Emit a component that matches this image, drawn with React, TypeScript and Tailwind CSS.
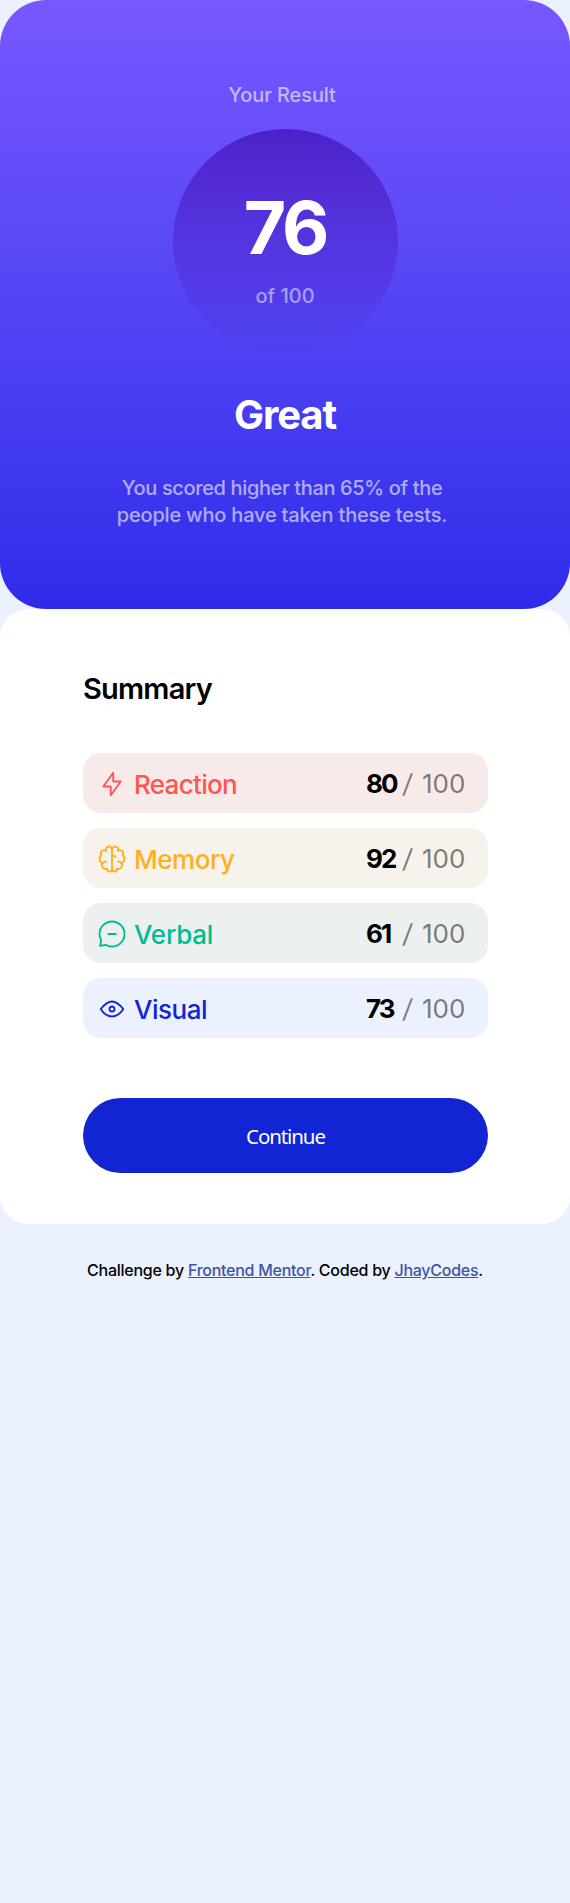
import type { ReactNode } from "react";

type Score = {
  label: string;
  value: number;
  box: string;
  text: string;
  spacing: string;
  icon: ReactNode;
};

const scores: Score[] = [
  {
    label: "Reaction",
    value: 80,
    box: "bg-[#f9eaea]",
    text: "text-[#ff5555]",
    spacing: "tracking-[-0.7px]",
    icon: <path d="M10.833 8.333V2.5l-6.666 9.167h5V17.5l6.666-9.167h-5Z" />,
  },
  {
    label: "Memory",
    value: 92,
    box: "bg-[#f7f2eb]",
    text: "text-[#ffb01f]",
    spacing: "tracking-[-0.45px]",
    icon: (
      <>
        <path d="M5.833 11.667a2.5 2.5 0 1 0 .834 4.858" />
        <path d="M3.553 13.004a3.333 3.333 0 0 1-.728-5.53m.025-.067a2.083 2.083 0 0 1 2.983-2.824m.199.054A2.083 2.083 0 1 1 10 3.75v12.917a1.667 1.667 0 0 1-3.333 0M10 5.833a2.5 2.5 0 0 0 2.5 2.5m1.667 3.334a2.5 2.5 0 1 1-.834 4.858" />
        <path d="M16.447 13.004a3.334 3.334 0 0 0 .728-5.53m-.025-.067a2.083 2.083 0 0 0-2.983-2.824M10 3.75a2.085 2.085 0 0 1 2.538-2.033 2.084 2.084 0 0 1 1.43 2.92m-.635 12.03a1.667 1.667 0 0 1-3.333 0" />
      </>
    ),
  },
  {
    label: "Verbal",
    value: 61,
    box: "bg-[#ecf1f0]",
    text: "text-[#00bd91]",
    spacing: "tracking-[-0.2px]",
    icon: (
      <path d="M7.5 10h5M10 18.333A8.333 8.333 0 1 0 1.667 10c0 1.518.406 2.942 1.115 4.167l-.699 3.75 3.75-.699A8.295 8.295 0 0 0 10 18.333Z" />
    ),
  },
  {
    label: "Visual",
    value: 73,
    box: "bg-[#ebf1ff]",
    text: "text-[#1125d4]",
    spacing: "tracking-[-0.5px]",
    icon: (
      <>
        <path d="M10 11.667a1.667 1.667 0 1 0 0-3.334 1.667 1.667 0 0 0 0 3.334Z" />
        <path d="M17.5 10c-1.574 2.492-4.402 5-7.5 5s-5.926-2.508-7.5-5C4.416 7.632 6.66 5 10 5s5.584 2.632 7.5 5Z" />
      </>
    ),
  },
];

function ScoreRow({ score }: { score: Score }) {
  return (
    <li className={`flex h-[60px] items-center rounded-[18px] pr-[21px] pl-[14px] ${score.box}`}>
      <span className={`flex items-center ${score.text}`}>
        <svg
          className="mt-[2px] size-[30px]"
          viewBox="0 0 20 20"
          fill="none"
          stroke="currentColor"
          strokeWidth="1.25"
          strokeLinecap="round"
          strokeLinejoin="round"
        >
          {score.icon}
        </svg>
        <span className={`pt-[3px] pl-[7px] text-[26px] leading-8 font-medium ${score.spacing}`}>
          {score.label}
        </span>
      </span>
      <span className="ml-auto flex pt-[2px] text-[26px] leading-8">
        <b className="w-[37px] font-bold tracking-[-1.9px] text-black">{score.value}</b>
        <span className="w-[19px] -skew-x-6 text-black/50">/</span>
        <span className="w-[45px] text-black/50">100</span>
      </span>
    </li>
  );
}

export default function App() {
  return (
    <div className="min-h-[1903px] bg-[#ebf1ff] font-['Inter',sans-serif]">
      <section className="flex h-[609px] flex-col items-center rounded-[46px] bg-linear-to-b from-[#7857ff] to-[#2e2be9] pt-[81px] text-center">
        <p className="pr-[6px] text-[20px] leading-7 font-medium tracking-[-0.1px] text-white/60">
          Your Result
        </p>
        <div className="mt-5 flex size-[225px] flex-col items-center rounded-full bg-linear-to-b from-[#4d21c9] to-[#2521c9]/0 pt-[63px]">
          <span className="text-[73px] leading-[72px] font-bold tracking-[-3px] text-white">76</span>
          <span className="mt-[18px] text-[20px] leading-7 font-medium text-white/50">of 100</span>
        </div>
        <h1 className="mt-[37px] text-[40px] leading-[48px] font-bold tracking-[-1.1px] text-white">
          Great
        </h1>
        <p className="mt-9 flex flex-col pr-[6px] text-[20px] leading-[27px] font-medium text-white/60">
          <span className="tracking-[-0.36px]">You scored higher than 65% of the</span>
          <span className="tracking-[-0.2px]">people who have taken these tests.</span>
        </p>
      </section>

      <section className="rounded-[28px] bg-white px-[83px] pt-[60px] pb-[51px]">
        <h2 className="text-[29px] leading-10 font-semibold tracking-[-0.8px] text-black">Summary</h2>
        <ul className="mt-11 flex w-[405px] flex-col gap-[15px]">
          {scores.map((score) => (
            <ScoreRow key={score.label} score={score} />
          ))}
        </ul>
        <button className="mt-[60px] block h-[75px] w-[405px] rounded-full bg-[#1125d4] pt-[2px] font-['Noto_Sans',sans-serif] text-[20.5px] tracking-[-1.1px] text-white">
          Continue
        </button>
      </section>

      <footer className="pt-[34px] text-center text-[16px] leading-6 font-medium tracking-[-0.26px] text-black">
        Challenge by{" "}
        <a className="text-[#3e54a3] underline" href="#">
          Frontend Mentor
        </a>
        . Coded by{" "}
        <a className="text-[#3e54a3] underline" href="#">
          JhayCodes
        </a>
        .
      </footer>
    </div>
  );
}
